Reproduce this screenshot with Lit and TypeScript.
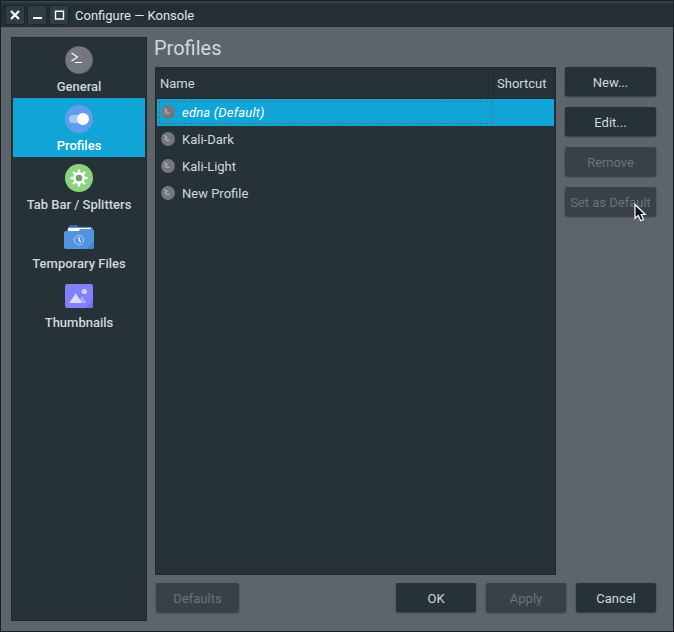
import { LitElement, html, css, svg } from "lit";
import { customElement } from "lit/decorators.js";
import { classMap } from "lit/directives/class-map.js";

const terminal = svg`
  <circle cx="14" cy="14" r="13.8" fill="#74777f"/>
  <path d="M17 27.4L27.4 17A13.8 13.8 0 0 1 17 27.4Z" fill="#686d75"/>
  <path d="M6.5 7L12.5 11L6.5 15M9.8 16.5H17" fill="none" stroke="#fff" stroke-width="1.2"/>`;

const toggle = svg`
  <circle cx="14" cy="14" r="14" fill="#5e9eea"/>
  <rect x="4" y="10" width="18" height="8" rx="4" fill="#a3c8f3"/>
  <circle cx="18" cy="14" r="6" fill="#fff"/>`;

const gear = svg`
  <circle cx="14" cy="14" r="14" fill="#8cd37f"/>
  <circle cx="14" cy="14" r="4.6" fill="#68a860" stroke="#fff" stroke-width="2.6"/>
  ${[0, 45, 90, 135, 180, 225, 270, 315].map(
    (a) => svg`<path d="M13 8.8L13.2 5.7H14.8L15 8.8Z" fill="#fff" stroke="#fff" stroke-width=".5" transform="rotate(${a} 14 14)"/>`
  )}`;

const folder = svg`
  <path d="M4 6V3.5Q4 2 5.5 2H12L14 3.8H26Q28 3.8 28 5.5V8H2V6Z" fill="#356aa5"/>
  <path d="M3 4.8H26V6.2H16L14 8H3Z" fill="#fff"/>
  <path d="M-1 9.5Q-1 8 .8 8H13.5L15.5 6.2H27.4Q29 6.2 29 7.8V24.2Q29 26 27.3 26H.7Q-1 26 -1 24.2Z" fill="#5294e2"/>
  <path d="M21 26L29 18V24.2Q29 26 27.3 26Z" fill="#4685cf"/>
  <circle cx="14" cy="17" r="4.7" fill="none" stroke="#b2d0f4" stroke-width=".9"/>
  <path d="M14 14V17L15.7 19" fill="none" stroke="#fff" stroke-width="1.2"/>`;

const picture = svg`
  <rect x="0" y="2" width="28" height="24" rx="2" fill="#8281fa"/>
  <path d="M20 26L28 18V24Q28 26 26 26Z" fill="#7372e8"/>
  <path d="M13 21L17 14L21.8 21Z" fill="#a9a8fc"/>
  <path d="M4.2 21L10.8 11.2L17 21Z" fill="#dadaff"/>
  <circle cx="19.3" cy="9.5" r="2.6" fill="#d3d3fe"/>`;

const pages = [
  { label: "General", icon: terminal },
  { label: "Profiles", icon: toggle, active: true },
  { label: "Tab Bar / Splitters", icon: gear },
  { label: "Temporary Files", icon: folder },
  { label: "Thumbnails", icon: picture },
];

const profiles = ["edna (Default)", "Kali-Dark", "Kali-Light", "New Profile"];

@customElement("app-root")
export class AppRoot extends LitElement {
  static styles = css`
    :host {
      display: flex;
      flex-direction: column;
      position: relative;
      box-sizing: border-box;
      width: 674px;
      height: 632px;
      border: 1px solid #181f24;
      background: #5d656b;
      color: #cfd8dc;
      font: 13px/16px Roboto, sans-serif;
      overflow: hidden;
    }
    .titlebar {
      flex: none;
      display: flex;
      align-items: center;
      box-sizing: border-box;
      height: 26px;
      padding: 1px 0 0 4px;
      gap: 2px;
      background: linear-gradient(#37444b 0, #37444b 1px, #29343a 2px, #232d32 5px, #263238 24px, #1f292e 26px);
    }
    .win {
      box-sizing: border-box;
      width: 20px;
      height: 20px;
      border: 1px solid #1d272c;
      border-radius: 2px;
      background: #2f3d44;
    }
    .win svg { display: block; }
    .caption { margin-left: 4px; padding-top: 2px; color: #dfe5e8; }
    .body { display: flex; flex: 1; padding: 10px 16px 10px 10px; gap: 8px; }
    .sidebar {
      box-sizing: border-box;
      width: 136px;
      padding: 1px;
      border: 1px solid #1f292e;
      background: #263238;
    }
    .page {
      display: flex;
      flex-direction: column;
      align-items: center;
      box-sizing: border-box;
      height: 59px;
      padding-top: 7px;
      gap: 5px;
      font-weight: 500;
      white-space: nowrap;
    }
    .page svg { overflow: visible; }
    .page.active { background: #10a5d6; color: #fff; }
    .main { flex: 1; display: flex; flex-direction: column; }
    h1 { margin: 0 0 0 -1px; height: 30px; font-size: 20px; line-height: 22px; font-weight: 400; }
    .content { display: flex; height: 508px; gap: 9px; }
    .table {
      box-sizing: border-box;
      width: 401px;
      border: 1px solid #1f292e;
      padding: 1px;
      background: #263238;
    }
    .head {
      display: flex;
      box-sizing: border-box;
      height: 30px;
      border: 1px solid #1f292e;
      border-width: 1px 1px 1px 0;
      line-height: 27px;
    }
    .head .name { width: 333px; padding-left: 3px; border-right: 1px solid #1f292e; }
    .head .shortcut { padding-left: 3px; }
    .row { display: flex; height: 27px; }
    .row .cell { box-sizing: border-box; display: flex; align-items: center; gap: 7px; width: 336px; padding-left: 4px; }
    .row svg { position: relative; top: -0.5px; }
    .row.selected { background: #10a5d6; color: #fff; font-style: italic; letter-spacing: 0.2px; }
    .row.selected .cell { margin: 2px 0 2px 2px; width: 334px; padding-left: 1px; border: 1px dashed #4c7482; }
    .actions { display: flex; flex-direction: column; gap: 11px; width: 91px; }
    .btn {
      flex: none;
      box-sizing: border-box;
      height: 29px;
      border-radius: 2px;
      background: #263238;
      text-align: center;
      line-height: 31px;
      white-space: nowrap;
      box-shadow: 0 1px 2px rgba(20, 28, 33, 0.6);
    }
    .btn.off { background: #374147; color: #69747a; }
    .footer { display: flex; margin-top: 8px; padding-left: 1px; gap: 10px; }
    .footer .btn { width: 80px; }
    .footer .btn.off:first-child { width: 83px; margin-right: 147px; }
    .cursor { position: absolute; left: 632px; top: 202px; }
  `;

  render() {
    return html`
      <div class="titlebar">
        <div class="win"><svg width="18" height="18"><path d="M5 5L13 13M13 5L5 13" stroke="#fff" stroke-width="2.2"/></svg></div>
        <div class="win"><svg width="18" height="18"><path d="M5 12H14" stroke="#fff" stroke-width="2"/></svg></div>
        <div class="win"><svg width="18" height="18"><path d="M5.5 5.2H13.5V13H5.5Z" fill="none" stroke="#fff" stroke-width="1.4"/></svg></div>
        <div class="caption">Configure — Konsole</div>
      </div>
      <div class="body">
        <div class="sidebar">
          ${pages.map((p) => html`
            <div class=${classMap({ page: true, active: !!p.active })}>
              <svg width="28" height="28" viewBox="0 0 28 28">${p.icon}</svg>
              <span>${p.label}</span>
            </div>`)}
        </div>
        <div class="main">
          <h1>Profiles</h1>
          <div class="content">
            <div class="table">
              <div class="head"><div class="name">Name</div><div class="shortcut">Shortcut</div></div>
              ${profiles.map((name, i) => html`
                <div class=${classMap({ row: true, selected: i === 0 })}>
                  <div class="cell"><svg width="14" height="14" viewBox="0 0 28 28">${terminal}</svg><span>${name}</span></div>
                </div>`)}
            </div>
            <div class="actions">
              <div class="btn">New...</div>
              <div class="btn">Edit...</div>
              <div class="btn off">Remove</div>
              <div class="btn off">Set as Default</div>
            </div>
          </div>
          <div class="footer">
            <div class="btn off">Defaults</div>
            <div class="btn">OK</div>
            <div class="btn off">Apply</div>
            <div class="btn">Cancel</div>
          </div>
        </div>
      </div>
      <svg class="cursor" width="14" height="20" viewBox="0 0 14 20">
        <path d="M2 1.5V15.3L5.3 12.4L7.7 17.8L10.5 16.6L8.2 11.5H12.3Z" fill="#111" stroke="#fff" stroke-width="1.2"/>
      </svg>`;
  }
}
